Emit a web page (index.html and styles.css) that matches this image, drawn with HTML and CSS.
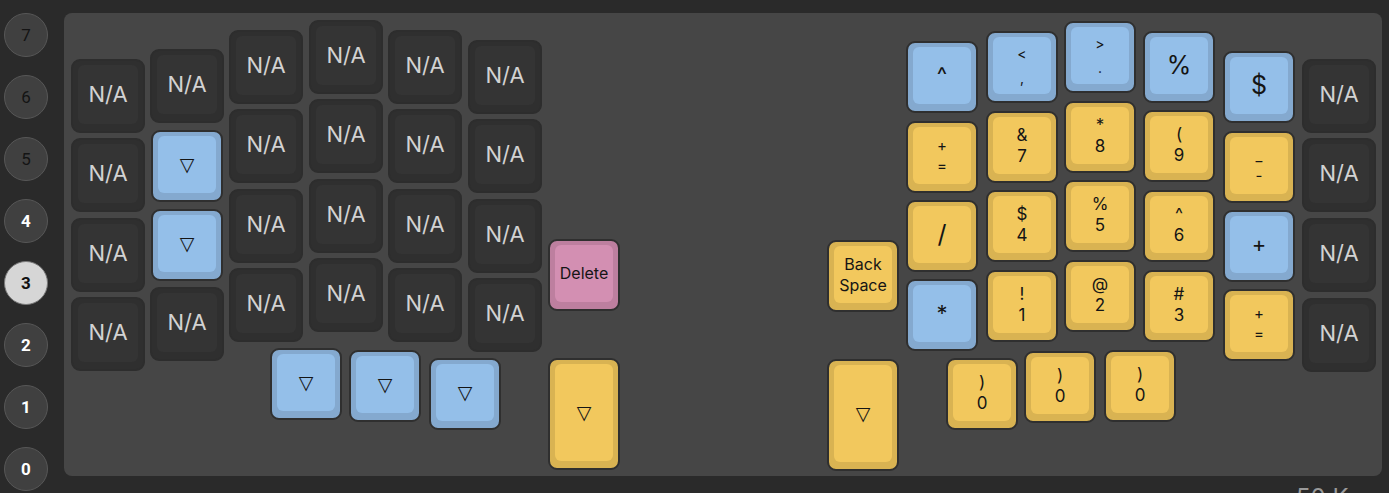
FILE: index.html
```html
<!DOCTYPE html>
<html lang="en">
<head>
    <meta charset="UTF-8">
    <title>Keymap Editor</title>
    <link rel="stylesheet" href="styles.css">
</head>
<body>
    <div class="layers">
        <div class="layer off">7</div>
        <div class="layer off">6</div>
        <div class="layer off">5</div>
        <div class="layer">4</div>
        <div class="layer active">3</div>
        <div class="layer">2</div>
        <div class="layer">1</div>
        <div class="layer">0</div>
    </div>

    <div class="main">
        <div class="board">
            <!-- left half -->
            <div class="key na" style="left:7px;top:46px"><span>N/A</span></div>
            <div class="key na" style="left:7px;top:125px"><span>N/A</span></div>
            <div class="key na" style="left:7px;top:205px"><span>N/A</span></div>
            <div class="key na" style="left:7px;top:284px"><span>N/A</span></div>

            <div class="key na" style="left:86px;top:36px"><span>N/A</span></div>
            <div class="key blue" style="left:86px;top:116px"><span class="tri">▽</span></div>
            <div class="key blue" style="left:86px;top:195px"><span class="tri">▽</span></div>
            <div class="key na" style="left:86px;top:274px"><span>N/A</span></div>

            <div class="key na" style="left:165px;top:17px"><span>N/A</span></div>
            <div class="key na" style="left:165px;top:96px"><span>N/A</span></div>
            <div class="key na" style="left:165px;top:176px"><span>N/A</span></div>
            <div class="key na" style="left:165px;top:255px"><span>N/A</span></div>

            <div class="key na" style="left:245px;top:7px"><span>N/A</span></div>
            <div class="key na" style="left:245px;top:86px"><span>N/A</span></div>
            <div class="key na" style="left:245px;top:166px"><span>N/A</span></div>
            <div class="key na" style="left:245px;top:245px"><span>N/A</span></div>

            <div class="key na" style="left:324px;top:17px"><span>N/A</span></div>
            <div class="key na" style="left:324px;top:96px"><span>N/A</span></div>
            <div class="key na" style="left:324px;top:176px"><span>N/A</span></div>
            <div class="key na" style="left:324px;top:255px"><span>N/A</span></div>

            <div class="key na" style="left:404px;top:27px"><span>N/A</span></div>
            <div class="key na" style="left:404px;top:106px"><span>N/A</span></div>
            <div class="key na" style="left:404px;top:186px"><span>N/A</span></div>
            <div class="key na" style="left:404px;top:265px"><span>N/A</span></div>

            <div class="key blue" style="left:205px;top:334px"><span class="tri">▽</span></div>
            <div class="key blue" style="left:284px;top:336px"><span class="tri">▽</span></div>
            <div class="key blue" style="left:364px;top:344px"><span class="tri">▽</span></div>

            <div class="key pink" style="left:483px;top:225px"><span class="word">Delete</span></div>
            <div class="key yellow tall" style="left:483px;top:344px"><span class="tri">▽</span></div>

            <!-- right half -->
            <div class="key yellow" style="left:762px;top:226px"><span class="word">Back<br>Space</span></div>
            <div class="key yellow tall" style="left:762px;top:345px"><span class="tri">▽</span></div>

            <div class="key blue" style="left:841px;top:27px"><span class="one">^</span></div>
            <div class="key yellow" style="left:841px;top:107px"><span class="xs">+<br>=</span></div>
            <div class="key yellow" style="left:841px;top:186px"><span class="big">/</span></div>
            <div class="key blue" style="left:841px;top:265px"><span class="one">*</span></div>

            <div class="key blue" style="left:921px;top:17px"><span class="xxs">&lt;<br>,</span></div>
            <div class="key yellow" style="left:921px;top:97px"><span class="sm">&amp;<br>7</span></div>
            <div class="key yellow" style="left:921px;top:176px"><span class="sm">$<br>4</span></div>
            <div class="key yellow" style="left:921px;top:256px"><span class="sm">!<br>1</span></div>

            <div class="key blue" style="left:999px;top:7px"><span class="xxs">&gt;<br>.</span></div>
            <div class="key yellow" style="left:999px;top:87px"><span class="sm">*<br>8</span></div>
            <div class="key yellow" style="left:999px;top:166px"><span class="sm">%<br>5</span></div>
            <div class="key yellow" style="left:999px;top:246px"><span class="sm">@<br>2</span></div>

            <div class="key blue" style="left:1078px;top:17px"><span class="big">%</span></div>
            <div class="key yellow" style="left:1078px;top:96px"><span class="sm">(<br>9</span></div>
            <div class="key yellow" style="left:1078px;top:176px"><span class="sm">^<br>6</span></div>
            <div class="key yellow" style="left:1078px;top:256px"><span class="sm">#<br>3</span></div>

            <div class="key blue" style="left:1158px;top:37px"><span class="big">$</span></div>
            <div class="key yellow" style="left:1158px;top:117px"><span class="xs">_<br>-</span></div>
            <div class="key blue" style="left:1158px;top:196px"><span class="one">+</span></div>
            <div class="key yellow" style="left:1158px;top:275px"><span class="xs">+<br>=</span></div>

            <div class="key na" style="left:1238px;top:46px"><span>N/A</span></div>
            <div class="key na" style="left:1238px;top:125px"><span>N/A</span></div>
            <div class="key na" style="left:1238px;top:205px"><span>N/A</span></div>
            <div class="key na" style="left:1238px;top:285px"><span>N/A</span></div>

            <div class="key yellow" style="left:881px;top:344px"><span class="sm">)<br>0</span></div>
            <div class="key yellow" style="left:959px;top:337px"><span class="sm">)<br>0</span></div>
            <div class="key yellow" style="left:1039px;top:336px"><span class="sm">)<br>0</span></div>
        </div>
        <div class="footer">50 Keys</div>
    </div>
</body>
</html>
```

FILE: styles.css
```css
body {
    margin: 0;
    height: 493px;
    overflow: hidden;
    display: flex;
    background: #2a2a2a;
    font-family: Inter, "Noto Sans", sans-serif;
}

/* layer selector */
.layers {
    flex: none;
    width: 64px;
    box-sizing: border-box;
    padding: 13px 0 0 4px;
    display: flex;
    flex-direction: column;
    gap: 18px;
}
.layer {
    width: 44px;
    height: 44px;
    box-sizing: border-box;
    border: 1px solid #575757;
    border-radius: 50%;
    background: #404040;
    color: #fff;
    font-family: Roboto, "Liberation Sans", sans-serif;
    font-weight: bold;
    font-size: 17px;
    display: flex;
    align-items: center;
    justify-content: center;
}
.layer.off {
    color: #141414;
    font-weight: normal;
}
.layer.active {
    background: #d6d6d6;
    border-color: #7a7a7a;
    color: #111;
}

.main {
    flex: 1;
    min-width: 0;
    padding: 13px 7px 0 0;
}
.board {
    position: relative;
    height: 463px;
    background: #464646;
    border-radius: 8px;
}
.footer {
    margin-top: 10px;
    padding-left: 1232px;
    white-space: nowrap;
    color: #9a9a9a;
    font-size: 24px;
    line-height: 1;
}

/* keys */
.key {
    --rim: #2f2f2f;
    --face: #343434;
    position: absolute;
    width: 74px;
    height: 74px;
    box-sizing: border-box;
    padding: 5px 6px 8px;
    border: 2px solid #2d2d2d;
    border-radius: 9px;
    background: var(--rim);
    display: flex;
    align-items: center;
    justify-content: center;
    text-align: center;
    color: #151515;
    font-size: 17px;
    line-height: 21px;
}
.key::before {
    content: "";
    position: absolute;
    inset: 4px 5px 7px;
    border-radius: 6px;
    background: var(--face);
}
.key span {
    position: relative;
}
.key.blue,
.key.yellow,
.key.pink {
    margin: 1px;
    width: 72px;
    height: 72px;
    border-color: #2f2f2f;
}
.key.tall {
    height: 112px;
}
.key.blue {
    --rim: #84a9cf;
    --face: #94bfe9;
}
.key.yellow {
    --rim: #d9b352;
    --face: #f2c85d;
}
.key.pink {
    --rim: #bd7f9f;
    --face: #d38fb2;
}
.key.na {
    color: #d2d2d2;
    font-size: 22px;
}

.key .tri {
    font-family: "DejaVu Sans", sans-serif;
    font-size: 19px;
}
.key .word {
    font-size: 16px;
}
.key .one {
    font-size: 22px;
}
.key .big {
    font-size: 25px;
}
.key .xs {
    font-size: 15px;
    line-height: 20px;
}
.key .xxs {
    font-size: 14px;
    line-height: 24px;
}
```
